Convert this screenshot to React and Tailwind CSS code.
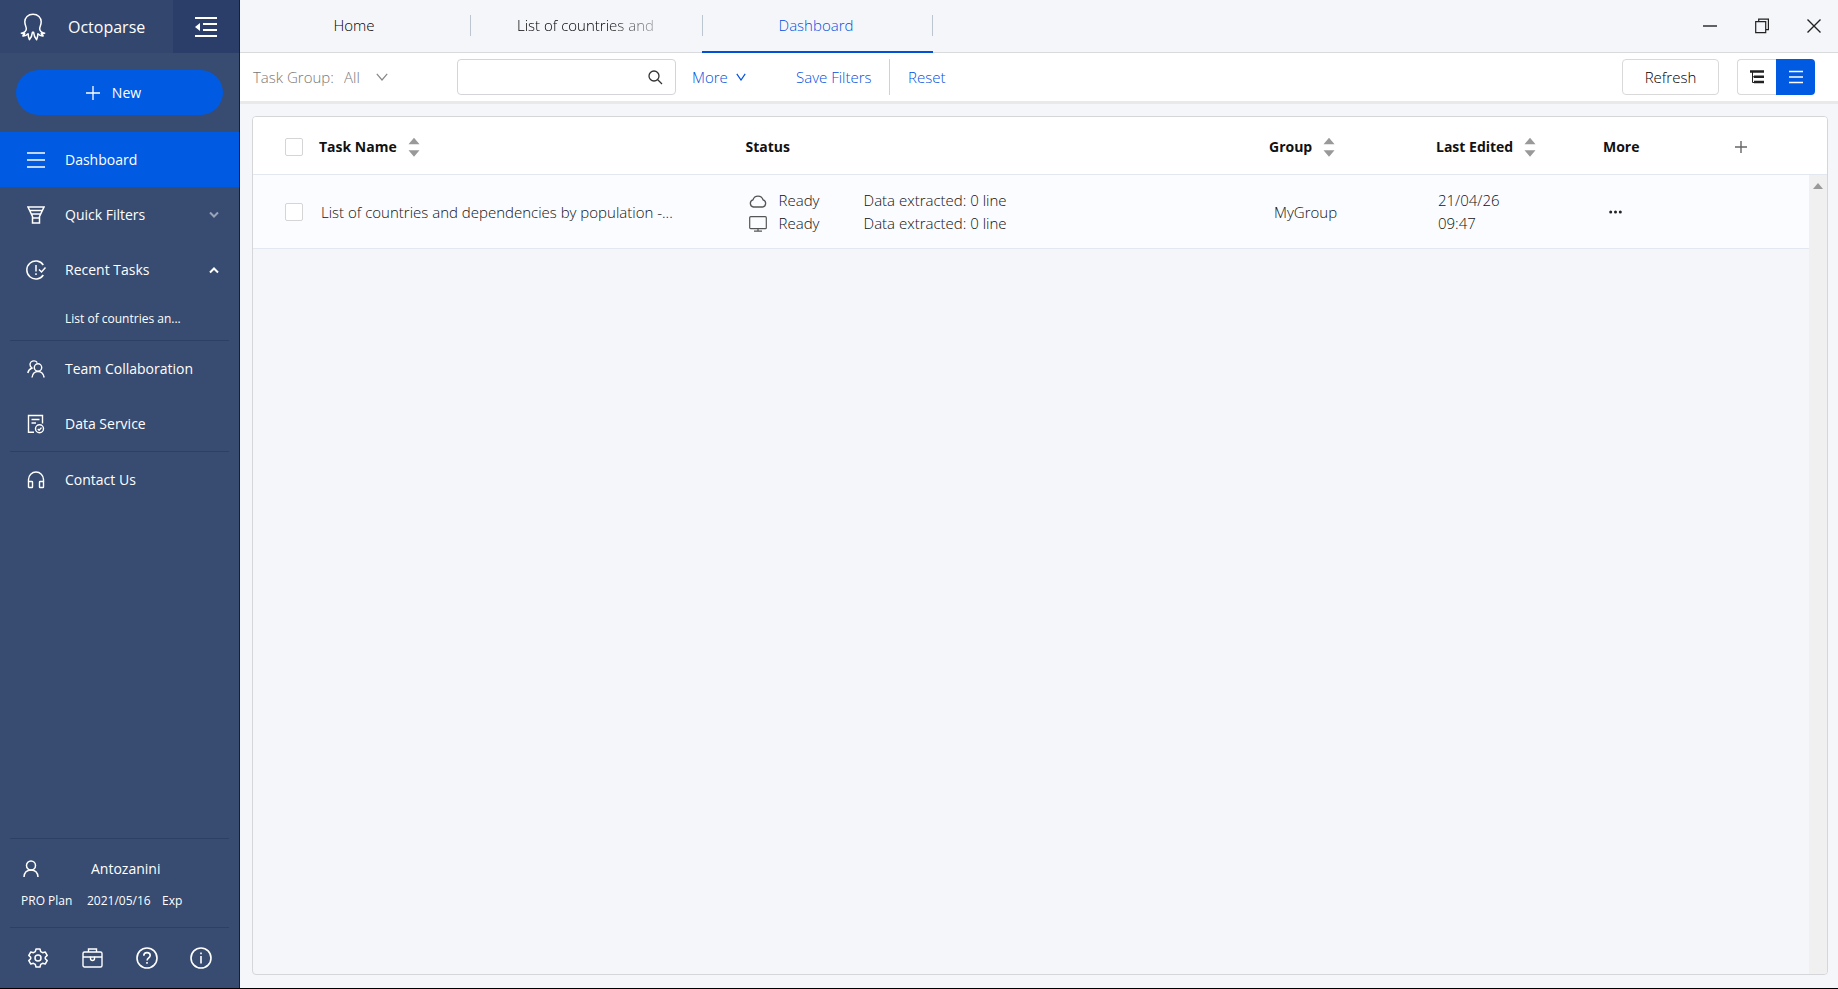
import clsx from 'clsx';

const TABS = [
  { label: 'Home' },
  { label: 'List of countries and dependencies by population' },
  { label: 'Dashboard', active: true },
];

const TASKS = [
  {
    id: 1,
    name: 'List of countries and dependencies by population -...',
    cloud: 'Ready',
    local: 'Ready',
    lines: 0,
    group: 'MyGroup',
    date: '21/04/26',
    time: '09:47',
  },
];

/* ── Icons ───────────────────────────────────────────────────────────────── */

function Svg({ w, h, sw = 1.4, className, children }) {
  return (
    <svg
      width={w}
      height={h}
      viewBox={`0 0 ${w} ${h}`}
      fill="none"
      stroke="currentColor"
      strokeWidth={sw}
      className={clsx('shrink-0', className)}
      aria-hidden="true"
    >
      {children}
    </svg>
  );
}

const OctopusIcon = () => (
  <Svg w={26} h={28} sw={1.5}>
    <path
      strokeLinejoin="round"
      d="M13 1.2C8 1.2 4.8 4.6 4.8 8.8c0 3.4 1.7 4.8 1.5 7.2-.2 2-1.9 3.6-5 4.2 1.2.6 2.2.6 3.4.3-.2 1-.9 1.800-1.900 2.400 2.300.2 3.900-.6 5.300-2.100.1 2.200.4 4 1.300 5.800 1.700-1.700 2.600-3.900 3-7.300h1.200c.4 3.400 1.300 5.600 3 7.300.9-1.800 1.200-3.600 1.300-5.800 1.400 1.500 3 2.300 5.300 2.100-1-.6-1.700-1.400-1.900-2.400 1.200.3 2.200.3 3.400-.3-3.100-.6-4.800-2.200-5-4.200-.2-2.400 1.500-3.800 1.500-7.200 0-4.200-3.200-7.600-8.200-7.600z"
    />
  </Svg>
);

const CollapseIcon = () => (
  <Svg w={24} h={22} sw={2}>
    <path d="M1 2h22M9 8h14M9 14h14M1 20h22" />
    <path d="M6 7v8L1 11z" fill="currentColor" stroke="none" />
  </Svg>
);

const PlusIcon = ({ size, sw }) => (
  <Svg w={size} h={size} sw={sw}>
    <path d={`M${size / 2} 0v${size}M0 ${size / 2}h${size}`} />
  </Svg>
);

const MenuIcon = () => (
  <Svg w={18} h={18} sw={1.6}>
    <path d="M0 2h18M0 9h18M0 16h18" />
  </Svg>
);

const FunnelIcon = () => (
  <Svg w={18} h={18} sw={1.5}>
    <path d="M1 1h16l-4.5 9.5V17h-7v-6.5zM2.8 4.5h12.4M4.5 8h9M5.5 12h7" />
  </Svg>
);

const RecentIcon = () => (
  <Svg w={20} h={20} sw={1.5}>
    <path d="M17.3 5A9 9 0 1 0 17.3 15" />
    <path d="M13 9.500l2.500 2.500 4-4.500" />
    <path d="M10 5v6.500M10 13.200v1.800" />
  </Svg>
);

const TeamIcon = () => (
  <Svg w={18} h={18}>
    <circle cx="11" cy="7.5" r="3.7" />
    <path d="M5 17.500c.5-3.500 2.500-6 6-6s5.500 2.500 6.200 6" />
    <path d="M10.300 2.600C9.500 1.500 8.300.9 7 .9 4.700.9 3 2.600 3 4.600c0 1.400.7 2.600 2 3.400C2.500 9 1.200 10.800.8 13" />
  </Svg>
);

const ServiceIcon = () => (
  <Svg w={18} h={20}>
    <path d="M7 18.300H1.500V1.500h14v8M4.500 5.500h8M4.500 9h4.500" />
    <circle cx="12.5" cy="14.8" r="4" />
    <path d="M10.800 15l1.300 1.300 2.400-2.700" />
  </Svg>
);

const HeadsetIcon = () => (
  <Svg w={18} h={18}>
    <path d="M1.500 11V8.500a7.500 7.500 0 0 1 15 0V11" />
    <rect x="1.5" y="10.5" width="4" height="6" rx=".6" />
    <rect x="12.5" y="10.5" width="4" height="6" rx=".6" />
  </Svg>
);

const UserIcon = () => (
  <Svg w={16} h={18} sw={1.5}>
    <circle cx="8" cy="5.5" r="4.5" />
    <path d="M1 17c.3-4 2.700-7 7-7s6.700 3 7 7" />
  </Svg>
);

const GearIcon = () => (
  <Svg w={20} h={20} sw={1.5}>
    <path
      strokeLinejoin="round"
      d="M8 1h4l.7 2.600 1.900 1.100 2.600-.7 2 3.400L17.300 9.300v1.400l1.900 1.900-2 3.400-2.600-.7-1.900 1.100L12 19H8l-.7-2.600-1.900-1.100-2.600.7-2-3.400 1.900-1.900V9.300L.8 7.400l2-3.400 2.600.7 1.900-1.100z"
    />
    <circle cx="10" cy="10" r="3" />
  </Svg>
);

const BriefcaseIcon = () => (
  <Svg w={21} h={20}>
    <rect x="1" y="4" width="19" height="15" rx="1.5" />
    <path d="M6.500 4V1h8v3M1 9h7.500M12.500 9H20" />
    <path d="M8.500 9v1.500a2 2 0 0 0 4 0V9z" />
  </Svg>
);

const HelpIcon = () => (
  <Svg w={22} h={22} sw={1.6}>
    <circle cx="11" cy="11" r="10" />
    <path d="M7.800 8.700c0-1.900 1.400-3.100 3.200-3.100s3.200 1.200 3.200 2.900c0 2.300-3.100 2.500-3.100 5M11 15v1.800" />
  </Svg>
);

const InfoIcon = () => (
  <Svg w={22} h={22} sw={1.6}>
    <circle cx="11" cy="11" r="10" />
    <path d="M11 9v7.500M11 5.500v1.800" />
  </Svg>
);

const ChevronDown = ({ w = 12, className }) => (
  <Svg w={w} h={8} sw={1.2} className={className}>
    <path d={`M.8.8L${w / 2} 7L${w - 0.8} .8`} />
  </Svg>
);

const SmallChevron = ({ up }) => (
  <Svg w={10} h={8} sw={2} className={up ? 'text-white' : 'text-[#99a4ba]'}>
    <path d={up ? 'M1 6.500l4-4 4 4' : 'M1 1.500l4 4 4-4'} />
  </Svg>
);

const SearchIcon = () => (
  <Svg w={15} h={15} sw={1.3}>
    <circle cx="6" cy="6" r="5" />
    <path d="M9.500 9.500l4.500 4.500" />
  </Svg>
);

const CloudIcon = () => (
  <Svg w={18} h={14} sw={1.3} className="text-[#555]">
    <path d="M4.500 13A3.700 3.700 0 0 1 4 5.800 5.200 5.200 0 0 1 14 5.800 3.700 3.700 0 0 1 13.500 13z" />
  </Svg>
);

const MonitorIcon = () => (
  <Svg w={18} h={16} sw={1.2} className="text-[#555]">
    <rect x=".7" y=".7" width="16.6" height="12" rx="1" />
    <path d="M9 12.700V15M5 15.200h8" />
  </Svg>
);

const TreeIcon = () => (
  <Svg w={14} h={14} sw={2.6}>
    <path d="M0 1.500h14M4 6.800h10M4 12h10" />
    <path d="M2.500 2v10.500H5M2.500 6.800H5" strokeWidth="1" />
  </Svg>
);

const ListIcon = () => (
  <Svg w={14} h={14} sw={1.4}>
    <path d="M0 1.500h14M0 7h14M0 12.500h14" />
  </Svg>
);

const SortIcon = () => (
  <svg width="12" height="20" viewBox="0 0 12 20" fill="#999" aria-hidden="true">
    <path d="M6 .8l5.500 6.500H.5zM6 19.800L.5 13.300h11z" />
  </svg>
);

/* ── Sidebar ─────────────────────────────────────────────────────────────── */

function NavItem({ icon, label, active, children }) {
  return (
    <a
      href="#"
      className={clsx('flex h-[55px] items-center pr-5 text-sm', active && 'bg-[#005be2]')}
    >
      <span className="ml-[25px] mr-[18px] flex w-[22px] justify-center">{icon}</span>
      <span className="flex-1 whitespace-nowrap">{label}</span>
      {children}
    </a>
  );
}

const Divider = () => <hr className="mx-[10px] border-[#2d3f64]" />;

function Sidebar() {
  return (
    <aside className="flex w-60 shrink-0 flex-col border-r border-[#0a2050] bg-[#384b70] text-white">
      <div className="flex h-[53px] shrink-0 bg-[#32466e]">
        <div className="flex flex-1 items-center pl-5 text-base">
          <OctopusIcon />
          <span className="ml-[22px]">Octoparse</span>
        </div>
        <button
          aria-label="Collapse menu"
          className="flex w-[66px] items-center justify-center bg-[#2b3e6a]"
        >
          <CollapseIcon />
        </button>
      </div>

      <div className="px-4 py-[17px]">
        <button className="flex h-[45px] w-full items-center justify-center gap-3 rounded-full bg-[#005be2] pr-3 text-sm">
          <PlusIcon size={14} sw={1.3} />
          New
        </button>
      </div>

      <nav>
        <NavItem icon={<MenuIcon />} label="Dashboard" active />
        <NavItem icon={<FunnelIcon />} label="Quick Filters">
          <SmallChevron />
        </NavItem>
        <NavItem icon={<RecentIcon />} label="Recent Tasks">
          <SmallChevron up />
        </NavItem>
        <a href="#" className="flex h-[43px] items-center pl-[65px] text-xs">
          List of countries an...
        </a>
        <Divider />
        <NavItem icon={<TeamIcon />} label="Team Collaboration" />
        <NavItem icon={<ServiceIcon />} label="Data Service" />
        <Divider />
        <NavItem icon={<HeadsetIcon />} label="Contact Us" />
      </nav>

      <div className="mt-auto">
        <Divider />
        <div className="flex h-10 items-end pl-[23px] text-sm">
          <div className="flex items-center">
            <UserIcon />
            <span className="ml-[52px]">Antozanini</span>
          </div>
        </div>
        <div className="flex h-12 items-start pl-[21px] pt-[14px] text-xs whitespace-pre">
          <span className="w-[66px]">PRO Plan</span>
          <span className="w-[75px]">2021/05/16</span>
          <span>Exp</span>
        </div>
        <Divider />
        <div className="grid h-[60px] grid-cols-4 items-center justify-items-center px-[11px]">
          <button aria-label="Settings"><GearIcon /></button>
          <button aria-label="Toolbox"><BriefcaseIcon /></button>
          <button aria-label="Help"><HelpIcon /></button>
          <button aria-label="About"><InfoIcon /></button>
        </div>
      </div>
    </aside>
  );
}

/* ── Top bars ────────────────────────────────────────────────────────────── */

function TabBar() {
  return (
    <header className="flex h-[53px] shrink-0 border-b border-[#d9dadc] bg-[#f5f6fa]">
      {TABS.map(({ label, active }) => (
        <a
          key={label}
          href="#"
          className={clsx(
            '-mb-px flex w-[231px] items-center border-b-2 text-[15px] font-light',
            active ? 'border-[#0050d8] text-[#0050e0]' : 'border-transparent text-black',
          )}
        >
          <span className="flex-1 pr-12 pl-[46px]">
            <span
              className={clsx(
                'block overflow-hidden text-center whitespace-nowrap',
                label.length > 20 &&
                  'text-left [mask-image:linear-gradient(to_right,black_65%,transparent_120%)]',
              )}
            >
              {label.length > 20 ? label.slice(0, 21) : label}
            </span>
          </span>
          <span className="h-[21px] w-px bg-[#bcc5d0]" />
        </a>
      ))}
      <div className="ml-auto flex items-center gap-[38px] pr-[17px] text-[#222]">
        <button aria-label="Minimize">
          <Svg w={14} h={14}><path d="M0 7h14" /></Svg>
        </button>
        <button aria-label="Restore">
          <Svg w={14} h={16} sw={1.2}>
            <path d="M.7 3.700h10v11H.7zM3.700 3.700V1.200h9.700v10.500h-2.700" />
          </Svg>
        </button>
        <button aria-label="Close">
          <Svg w={14} h={14}><path d="M.5.5l13 13M13.500.5l-13 13" /></Svg>
        </button>
      </div>
    </header>
  );
}

function FilterBar() {
  return (
    <div className="flex h-[51px] shrink-0 items-center border-b-3 border-[#e9e9e9] bg-white pr-[23px] pl-[13px] text-[15px] font-light text-[#0050e0]">
      <label htmlFor="group" className="w-[91px] whitespace-nowrap text-[#777]">
        Task Group:
      </label>
      <div className="flex w-[113px] items-center">
        <select id="group" className="w-8 appearance-none text-[#777] outline-none">
          <option>All</option>
        </select>
        <ChevronDown className="text-[#888]" />
      </div>

      <div className="flex h-9 w-[219px] items-center rounded border border-[#d3d5d8] pr-3">
        <input aria-label="Search tasks" className="h-full min-w-0 flex-1 px-3 outline-none" />
        <button aria-label="Search" className="text-[#333]"><SearchIcon /></button>
      </div>

      <button className="ml-4 flex w-[104px] items-center gap-2">
        More
        <ChevronDown w={10} />
      </button>
      <button className="w-[77px] text-left whitespace-nowrap">Save Filters</button>
      <span className="mr-[18px] ml-4 h-9 w-px bg-[#ccd2da]" />
      <button>Reset</button>

      <button className="ml-auto h-9 w-[97px] rounded border border-[#d9d9d9] text-black">
        Refresh
      </button>
      <div className="ml-[18px] flex h-9">
        <button
          aria-label="Tree view"
          className="flex w-[39px] items-center justify-center rounded-l border border-r-0 border-[#d9d9d9] text-[#222]"
        >
          <TreeIcon />
        </button>
        <button
          aria-label="List view"
          className="flex w-[39px] items-center justify-center rounded-r bg-[#005be2] text-white"
        >
          <ListIcon />
        </button>
      </div>
    </div>
  );
}

/* ── Task table ──────────────────────────────────────────────────────────── */

function Checkbox({ label }) {
  return (
    <input
      type="checkbox"
      aria-label={label}
      className="block size-[18px] appearance-none rounded-xs border border-[#d5d5d5] bg-white"
    />
  );
}

function SortHeader({ label }) {
  return (
    <button className="flex items-center gap-[11px] font-bold">
      {label}
      <SortIcon />
    </button>
  );
}

function StatusLine({ icon, status, lines }) {
  return (
    <div className="flex h-[23px] items-center pl-[3px]">
      {icon}
      <span className="ml-3 w-[85px]">{status}</span>
      <span>Data extracted: {lines} line</span>
    </div>
  );
}

function TaskTable() {
  return (
    <table className="w-full table-fixed text-left text-[15px]">
      <colgroup>
        <col className="w-[66px]" />
        <col className="w-[27.1%]" />
        <col />
        <col className="w-[167px]" />
        <col className="w-[167px]" />
        <col className="w-[132px]" />
        <col className="w-[92px]" />
      </colgroup>
      <thead className="bg-white text-sm text-[#111]">
        <tr className="h-[57px] border-b border-[#e3e8f0] [&>th]:pt-[3px]">
          <th className="pl-8"><Checkbox label="Select all tasks" /></th>
          <th><SortHeader label="Task Name" /></th>
          <th>Status</th>
          <th><SortHeader label="Group" /></th>
          <th><SortHeader label="Last Edited" /></th>
          <th>More</th>
          <th>
            <button aria-label="Add column" className="block text-[#666]">
              <PlusIcon size={12} sw={1.4} />
            </button>
          </th>
        </tr>
      </thead>
      <tbody className="font-light text-[#111]">
        {TASKS.map((task) => (
          <tr
            key={task.id}
            className="h-[74px] border-b border-[#e3e8f0] bg-[#fbfcff] [&>td]:pt-[2px]"
          >
            <td className="pl-8"><Checkbox label={task.name} /></td>
            <td className="truncate pl-[2px]">{task.name}</td>
            <td>
              <StatusLine icon={<CloudIcon />} status={task.cloud} lines={task.lines} />
              <StatusLine icon={<MonitorIcon />} status={task.local} lines={task.lines} />
            </td>
            <td className="pl-[5px]">{task.group}</td>
            <td className="pl-[2px] leading-[23px]">
              {task.date}
              <br />
              {task.time}
            </td>
            <td className="pl-[6px]">
              <button aria-label="More actions" className="block text-[#222]">
                <svg width="13" height="4" viewBox="0 0 13 4" fill="currentColor">
                  <circle cx="1.7" cy="2" r="1.5" />
                  <circle cx="6.5" cy="2" r="1.5" />
                  <circle cx="11.3" cy="2" r="1.5" />
                </svg>
              </button>
            </td>
            <td />
          </tr>
        ))}
      </tbody>
    </table>
  );
}

export default function App() {
  return (
    <div className="flex h-screen border-b border-black font-['Open_Sans','Noto_Sans',sans-serif]">
      <Sidebar />
      <div className="flex min-w-0 flex-1 flex-col bg-[#f5f6fa]">
        <TabBar />
        <FilterBar />
        <main className="flex min-h-0 flex-1 flex-col pt-3 pr-[10px] pb-[13px] pl-3">
          <div className="relative flex-1 overflow-hidden rounded border border-[#d5d6d9]">
            <TaskTable />
            {/* scrollbar track */}
            <div className="absolute top-[58px] right-0 bottom-0 flex w-[18px] justify-center bg-[#f0f0f0] pt-2">
              <svg width="10" height="6" viewBox="0 0 10 6" fill="#999">
                <path d="M5 0l5 6H0z" />
              </svg>
            </div>
          </div>
        </main>
      </div>
    </div>
  );
}
